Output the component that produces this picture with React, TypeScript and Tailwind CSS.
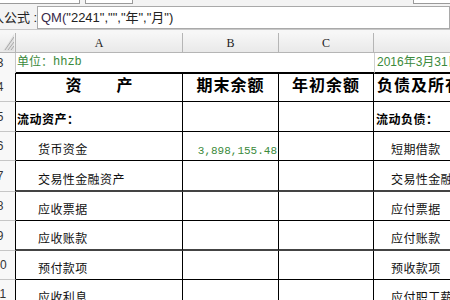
import React from "react";

const cjk = { fontFamily: '"Liberation Sans","Noto Sans CJK SC",sans-serif' };
const mono = { fontFamily: '"Liberation Mono","Noto Sans CJK SC",monospace' };

type Row = {
  n: string;
  h: string;
  a?: React.ReactNode;
  b?: React.ReactNode;
  c?: React.ReactNode;
  d?: React.ReactNode;
  thick?: boolean;
};

const rows: Row[] = [
  {
    n: "4",
    h: "h-[29px]",
    a: (
      <div className="flex h-full items-end justify-center pb-[3px] text-[16px] font-bold text-black">
        <span>资</span>
        <span className="w-[35px]" />
        <span>产</span>
      </div>
    ),
    b: <div className="flex h-full items-end justify-center pb-[3px] text-[16px] font-bold tracking-[1px] text-black">期末余额</div>,
    c: <div className="flex h-full items-end justify-center pb-[3px] text-[16px] font-bold tracking-[1px] text-black">年初余额</div>,
    d: <div className="flex h-full items-end pl-[3px] pb-[3px] text-[16px] font-bold tracking-[1px] text-black whitespace-nowrap">负债及所有者权益</div>,
  },
  {
    n: "5",
    h: "h-[30px]",
    a: <div className="flex h-full items-end pl-[1px] pb-[2px] text-[12px] font-bold tracking-[0.5px]">流动资产：</div>,
    d: <div className="flex h-full items-end pl-[2px] pb-[2px] text-[12px] font-bold tracking-[0.5px] whitespace-nowrap">流动负债：</div>,
  },
  {
    n: "6",
    h: "h-[29px]",
    a: "货币资金",
    b: (
      <div className="flex h-full items-end justify-end pr-[1px] pb-[1px] text-[11px] text-[#3b8a3b]" style={mono}>
        3,898,155.48
      </div>
    ),
    d: "短期借款",
  },
  { n: "7", h: "h-[31px]", a: "交易性金融资产", d: "交易性金融负债", thick: true },
  { n: "8", h: "h-[29px]", a: "应收票据", d: "应付票据" },
  { n: "9", h: "h-[30px]", a: "应收账款", d: "应付账款", thick: true },
  { n: "10", h: "h-[29px]", a: "预付款项", d: "预收款项" },
  { n: "11", h: "h-[29px]", a: "应收利息", d: "应付职工薪酬" },
];

function Label({ children, pl }: { children: React.ReactNode; pl: string }) {
  return (
    <div className={`flex h-full items-end ${pl} pb-[1px] text-[12px] tracking-[0.4px] text-[#111] whitespace-nowrap`}>
      {children}
    </div>
  );
}

function RowNum({ n }: { n: string }) {
  return (
    <div className="h-full w-[15px] overflow-hidden">
      <div className="flex h-full w-[30px] -ml-[15px] items-center justify-center text-[12px] text-[#333]" style={{ fontFamily: '"Liberation Sans",sans-serif' }}>
        {n}
      </div>
    </div>
  );
}

export default function App() {
  const grid = "grid grid-cols-[16px_167px_96px_95px_1fr]";
  return (
    <div className="w-[450px] h-[300px] overflow-hidden bg-white" style={cjk}>
      {/* top toolbar remnants */}
      <div className="flex h-[6px] bg-[#f3f3f3]">
        <div className="w-[80px] h-[4px] border-b border-r border-[#9a9a9a] bg-white" />
        <div className="ml-[5px] w-[48px] h-[4px] border-b border-x border-[#9a9a9a] bg-white" />
        <div className="flex-1" />
        <div className="w-[37px] h-[4px] border-b border-l border-[#9a9a9a] bg-white" />
      </div>
      {/* formula bar */}
      <div className="flex h-[23px] items-stretch bg-[#f3f3f3]">
        <div className="w-[37px] flex items-center text-[13px] text-[#222] whitespace-nowrap overflow-hidden">
          <span className="-ml-[9px]">入公式 :</span>
        </div>
        <div className="flex-1 border border-[#a9a9a9] bg-white flex items-center pl-[3px] text-[13px] text-[#222]" style={{ fontFamily: '"Liberation Sans","Noto Sans CJK SC",sans-serif' }}>
          <span className="text-[#3a2a4a]">QM(</span>
          <span>"2241","","年","月")</span>
        </div>
      </div>
      <div className="h-[4px] bg-[#f7f7f7] border-t border-[#c8c8c8]" />
      {/* column headers */}
      <div className={`${grid} h-[20px] bg-gradient-to-b from-[#f7f7f7] to-[#e9e9e9] border-b border-[#b5b5b5] text-[12px] text-[#222]`} style={{ fontFamily: '"Liberation Serif",serif' }}>
        <div className="border-r border-[#b5b5b5] relative">
          <svg className="absolute right-[1px] bottom-[1px]" width="11" height="17" viewBox="0 0 11 17">
            <path d="M11 0 L11 17 L0 17 Z" fill="#e0e0e0" />
            <path d="M11 3 L2 16 M11 8 L5 16 M11 12 L8 16" stroke="#a8a8a8" strokeWidth="1" />
          </svg>
        </div>
        <div className="border-r border-[#b5b5b5] flex items-center justify-center">A</div>
        <div className="border-r border-[#b5b5b5] flex items-center justify-center">B</div>
        <div className="border-r border-[#b5b5b5] flex items-center justify-center">C</div>
        <div />
      </div>
      {/* row 3 */}
      <div className={`${grid} h-[20px]`}>
        <div className="border-r border-b border-[#c6c6c6] bg-[#f8f8f8]">
          <RowNum n="3" />
        </div>
        <div className="col-span-3 border-b-2 border-black flex items-end pl-[1px] pb-[1px] text-[12px] text-[#3b8a3b] whitespace-nowrap">
          单位：<span style={mono} className="text-[12px]">hhzb</span>
        </div>
        <div className="border-l border-b-2 border-l-[#d0d0d0] border-b-black flex items-end pl-[2px] pb-[1px] text-[12px] text-[#3b8a3b] whitespace-nowrap overflow-hidden">
          2016年3月31日
        </div>
      </div>
      {/* table rows */}
      {rows.map((r) => (
        <div key={r.n} className={`${grid} ${r.h}`}>
          <div className="border-r border-b border-[#c6c6c6] border-r-black bg-[#f8f8f8]">
            <RowNum n={r.n} />
          </div>
          <div className={`border-r border-black ${r.thick ? "border-b-2 border-b-[#444]" : "border-b"} overflow-hidden`}>
            {typeof r.a === "string" ? <Label pl="pl-[22px]">{r.a}</Label> : r.a}
          </div>
          <div className={`border-r border-black ${r.thick ? "border-b-2 border-b-[#444]" : "border-b"} overflow-hidden`}>
            {r.b}
          </div>
          <div className={`border-r border-black ${r.thick ? "border-b-2 border-b-[#444]" : "border-b"} overflow-hidden`}>
            {r.c}
          </div>
          <div className={`border-black ${r.thick ? "border-b-2 border-b-[#444]" : "border-b"} overflow-hidden`}>
            {typeof r.d === "string" ? <Label pl="pl-[17px]">{r.d}</Label> : r.d}
          </div>
        </div>
      ))}
    </div>
  );
}
